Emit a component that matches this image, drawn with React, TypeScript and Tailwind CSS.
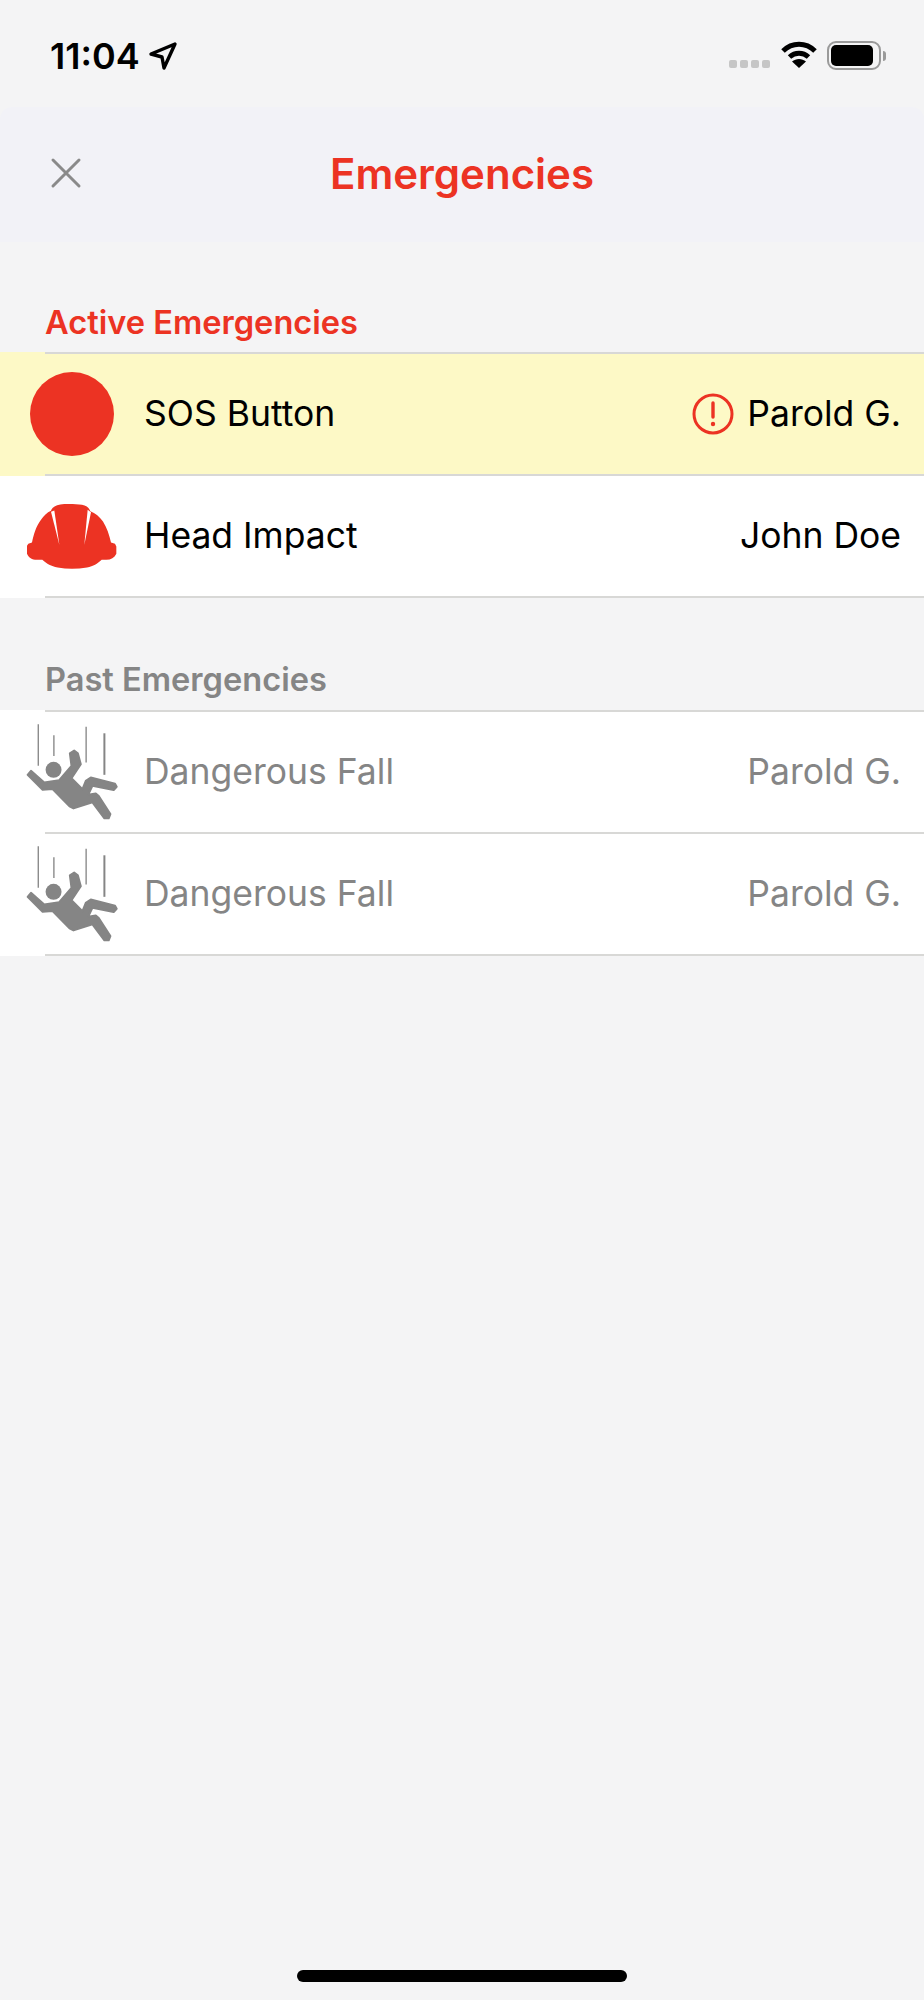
const RED = '#ec3323';

function Helmet() {
  return (
    <svg width="90" height="67" viewBox="0 0 270 200">
      <path fill={RED} d="M0 128 L4 122 L15 118 C20 95 26 72 42 50 C50 38 60 28 72 23 C75 12 85 7 100 4 C115 2 145 2 165 5 C178 7 186 14 190 24 C205 30 218 40 228 55 C240 75 247 95 252 118 L264 122 L268 130 L268 152 C262 164 252 170 238 170 L224 170 C210 182 200 190 180 193 C150 198 120 198 92 193 C72 190 60 182 46 170 L30 170 C14 170 6 164 0 152 Z" />
      <path fill="#fff" d="M72 26 L82 22 L97 125 Z" />
      <path fill="#fff" d="M182 20 L192 27 L172 125 Z" />
    </svg>
  );
}

function Faller() {
  return (
    <svg width="97" height="103" viewBox="70 60 290 310">
      <g stroke="#858585" fill="none">
        <path d="M112 70V195" strokeWidth="4" />
        <path d="M159 103V165" strokeWidth="4" />
        <path d="M256 77V185" strokeWidth="4" />
        <path d="M311 97V222" strokeWidth="6" />
      </g>
      <circle cx="158" cy="207" r="24" fill="#858585" />
      <path
        fill="#858585"
        stroke="#858585"
        strokeWidth="6"
        strokeLinejoin="round"
        d="M80 222 L90 210 L130 245 L175 238 L212 195 L207 157 L220 149 L231 157 L240 190 L212 232 L245 265 L255 240 L270 230 L343 249 L348 258 L339 268 L275 255 L262 282 L285 278 L294 286 L329 340 L324 353 L311 353 L275 305 L218 323 L206 317 L155 265 L125 267 Z"
      />
    </svg>
  );
}

function Separator() {
  return <div className="h-[2px] ml-[45px] bg-[#d8d8d6]" />;
}

function Row({ icon, label, who, bg = 'bg-white', muted = false, alert = false }: { icon: React.ReactNode; label: string; who: string; bg?: string; muted?: boolean; alert?: boolean }) {
  return (
    <div className={bg}>
      <div className={`flex items-center h-[120px] pr-[23px] text-[35.5px] ${muted ? 'text-[#858585]' : 'text-black'}`}>
        <div className="w-[144px] shrink-0 flex justify-center">{icon}</div>
        <span className="flex-1">{label}</span>
        {alert && (
          <svg width="42" height="42" viewBox="0 0 42 42" className="mr-[13px]">
            <circle cx="21" cy="21" r="19" fill="none" stroke={RED} strokeWidth="3" />
            <path d="M21 10V24" stroke={RED} strokeWidth="3.4" strokeLinecap="round" />
            <circle cx="21" cy="31" r="2.2" fill={RED} />
          </svg>
        )}
        <span>{who}</span>
      </div>
      <Separator />
    </div>
  );
}

export default function App() {
  return (
    <div className="h-[2000px] flex flex-col bg-[#f4f4f5] font-['Inter','Liberation_Sans',sans-serif]">
      <div className="h-[107px] flex items-start justify-between shrink-0">
        <div className="flex items-center ml-[50px] mt-[36px] gap-[8px]">
          <span className="text-[36px] leading-[40px] font-semibold text-black">11:04</span>
          <svg width="30" height="30" viewBox="0 0 30 30">
            <path d="M27 3 L3 13 L14 16 L16 27 Z" fill="none" stroke="#000" strokeWidth="3.4" strokeLinejoin="round" />
          </svg>
        </div>
        <div className="flex items-start mr-[38px] mt-[41px]">
          <div className="flex gap-[3px] mt-[19px] mr-[11px]">
            <div className="w-[8px] h-[8px] rounded-[2px] bg-[#c6c6c6]" />
            <div className="w-[8px] h-[8px] rounded-[2px] bg-[#c6c6c6]" />
            <div className="w-[8px] h-[8px] rounded-[2px] bg-[#c6c6c6]" />
            <div className="w-[8px] h-[8px] rounded-[2px] bg-[#c6c6c6]" />
          </div>
          <svg width="36" height="28" viewBox="0 0 36 28" className="mr-[10px]">
            <path d="M2 10 C11 1 25 1 34 10" fill="none" stroke="#000" strokeWidth="5" />
            <path d="M8.5 16 C14 11 22 11 27.5 16" fill="none" stroke="#000" strokeWidth="5" />
            <path d="M18 27 L11 20.5 C15 17 21 17 25 20.5 Z" fill="#000" />
          </svg>
          <div className="w-[54px] h-[29px] rounded-[9px] border-[2px] border-[#9a9a9a] p-[2px]">
            <div className="w-[42px] h-full rounded-[5px] bg-black" />
          </div>
          <div className="w-[3px] h-[10px] mt-[10px] ml-[2px] rounded-r-[3px] bg-[#9a9a9a]" />
        </div>
      </div>

      <div className="h-[135px] shrink-0 rounded-t-[12px] bg-[#f2f2f7] relative flex items-center justify-center pb-[3px]">
        <svg width="32" height="32" viewBox="0 0 32 32" className="absolute left-[50px] top-[50px]">
          <path d="M3 3 L29 29 M29 3 L3 29" stroke="#8a8a8a" strokeWidth="3" strokeLinecap="round" />
        </svg>
        <span className="text-[42px] font-semibold text-[#ec3323]">Emergencies</span>
      </div>

      <div className="h-[110px] shrink-0 flex items-end pl-[45px] pb-[10px] text-[32.6px] leading-[40px] font-semibold text-[#ec3323]">Active Emergencies</div>
      <div className="bg-[#fdf9c6]"><Separator /></div>
      <Row icon={<div className="w-[84px] h-[84px] rounded-full bg-[#ec3323]" />} label="SOS Button" who="Parold G." bg="bg-[#fdf9c6]" alert />
      <Row icon={<Helmet />} label="Head Impact" who="John Doe" />

      <div className="h-[112px] shrink-0 flex items-end pl-[45px] pb-[11px] text-[32.6px] leading-[40px] font-semibold text-[#858585]">Past Emergencies</div>
      <div className="bg-white"><Separator /></div>
      <Row icon={<Faller />} label="Dangerous Fall" who="Parold G." muted />
      <Row icon={<Faller />} label="Dangerous Fall" who="Parold G." muted />

      <div className="mt-auto mb-[18px] mx-auto w-[330px] h-[12px] rounded-full bg-black" />
    </div>
  );
}
